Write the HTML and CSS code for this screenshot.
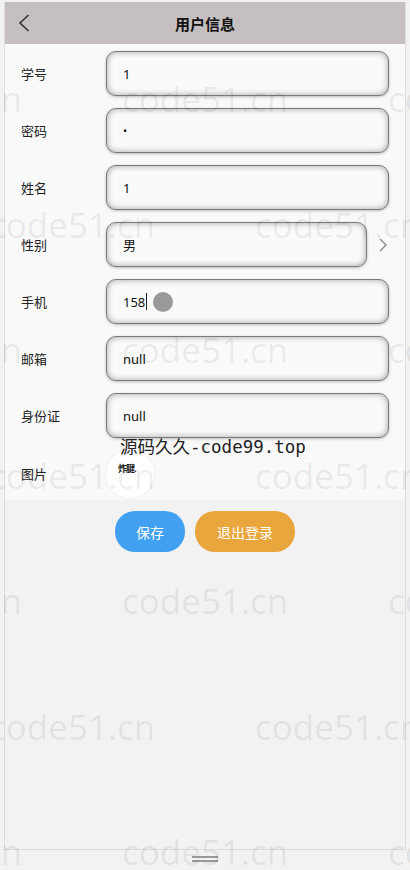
FILE: index.html
```html
<!DOCTYPE html>
<html lang="zh-CN">
<head>
    <meta charset="UTF-8">
    <meta name="viewport" content="width=device-width, initial-scale=1.0">
    <title>用户信息</title>
    <link rel="stylesheet" href="styles.css">
</head>
<body>
    <!-- 手机框 -->
    <div class="phone">
        <!-- 顶部栏 -->
        <div class="nav-bar">
            <span class="nav-back">
                <svg width="12" height="18" viewBox="0 0 12 18"><path d="M10.5 1 L2 9 L10.5 17" fill="none" stroke="#333" stroke-width="1.6"/></svg>
            </span>
            <span class="nav-title">用户信息</span>
        </div>

        <!-- 表单 -->
        <div class="form">
            <div class="form-row">
                <span class="form-label">学号</span>
                <div class="form-input">1</div>
            </div>
            <div class="form-row">
                <span class="form-label">密码</span>
                <div class="form-input password">•</div>
            </div>
            <div class="form-row">
                <span class="form-label">姓名</span>
                <div class="form-input">1</div>
            </div>
            <div class="form-row">
                <span class="form-label">性别</span>
                <div class="form-input short">男</div>
                <span class="row-arrow">
                    <svg width="8" height="14" viewBox="0 0 8 14"><path d="M1 1 L7 7 L1 13" fill="none" stroke="#8a8a8a" stroke-width="1.4"/></svg>
                </span>
            </div>
            <div class="form-row">
                <span class="form-label">手机</span>
                <div class="form-input">158<span class="caret"></span><span class="touch-dot"></span></div>
            </div>
            <div class="form-row">
                <span class="form-label">邮箱</span>
                <div class="form-input">null</div>
            </div>
            <div class="form-row">
                <span class="form-label">身份证</span>
                <div class="form-input">null</div>
            </div>
            <div class="form-row photo-row">
                <span class="form-label">图片</span>
                <div class="avatar"><span class="avatar-text">炸腱.</span></div>
                <span class="stamp">源码久久-code99.top</span>
            </div>
        </div>

        <!-- 按钮 -->
        <div class="button-container">
            <button class="btn btn-save">保存</button>
            <button class="btn btn-logout">退出登录</button>
        </div>
    </div>

    <!-- 底部把手 -->
    <div class="handle">
        <span></span>
        <span></span>
    </div>

    <!-- 水印 -->
    <div class="watermark">
        <div class="wm-row odd"><span>code51.cn</span><span>code51.cn</span><span>code51.cn</span></div>
        <div class="wm-row even"><span>code51.cn</span><span>code51.cn</span></div>
        <div class="wm-row odd"><span>code51.cn</span><span>code51.cn</span><span>code51.cn</span></div>
        <div class="wm-row even"><span>code51.cn</span><span>code51.cn</span></div>
        <div class="wm-row odd"><span>code51.cn</span><span>code51.cn</span><span>code51.cn</span></div>
        <div class="wm-row even"><span>code51.cn</span><span>code51.cn</span></div>
        <div class="wm-row odd"><span>code51.cn</span><span>code51.cn</span><span>code51.cn</span></div>
    </div>
</body>
</html>
```

FILE: styles.css
```css
/* 全局样式 */
body, html {
    margin: 0;
    padding: 0;
    height: 100%;
    overflow: hidden;
    font-family: 'Noto Sans', 'Noto Sans CJK SC', sans-serif;
    background: #f2f2f2;
    color: #222;
}

/* 手机框 */
.phone {
    margin: 2px 4px 0 4px;
    height: 847px;
    border: 1px solid #dcdcdc;
    border-top: none;
    display: flex;
    flex-direction: column;
}

/* 顶部栏 */
.nav-bar {
    height: 42px;
    background: #c5c0bf;
    display: flex;
    align-items: center;
    justify-content: center;
    position: relative;
}

.nav-back {
    position: absolute;
    left: 13px;
    top: 12px;
}

.nav-title {
    font-size: 15px;
    font-weight: bold;
    color: #111;
}

/* 表单 */
.form {
    background: #f9f9f9;
    padding: 7px 16px 6px 16px;
    display: flex;
    flex-direction: column;
    gap: 12px;
}

.form-row {
    display: flex;
    align-items: center;
    height: 45px;
    position: relative;
}

.form-label {
    width: 85px;
    font-size: 13px;
    color: #222;
}

.form-input {
    flex: 1;
    height: 43px;
    display: flex;
    align-items: center;
    padding-left: 16px;
    font-size: 13px;
    color: #111;
    background: #fafafa;
    border: 1px solid #7a7a7a;
    border-radius: 10px;
    box-shadow: inset 0 0 6px rgba(0, 0, 0, 0.35), 0 1px 3px rgba(0, 0, 0, 0.25);
}

.form-input.short {
    flex: none;
    width: 243px;
}

.form-input.password {
    font-size: 11px;
}

.row-arrow {
    margin-left: 12px;
    display: flex;
}

.caret {
    display: inline-block;
    width: 1px;
    height: 17px;
    background: #222;
    margin-left: 1px;
}

.touch-dot {
    display: inline-block;
    width: 20px;
    height: 20px;
    border-radius: 50%;
    background: #9a9a9a;
    margin-left: 6px;
}

/* 图片行 */
.photo-row {
    height: 44px;
}

.photo-row .form-label {
    padding-top: 2px;
}

.avatar {
    width: 48px;
    height: 48px;
    border-radius: 50%;
    background: #fff;
    box-shadow: 0 0 3px rgba(0, 0, 0, 0.08);
    position: relative;
    margin-top: 4px;
}

.avatar-text {
    position: absolute;
    left: 12px;
    top: 12px;
    font-size: 9px;
    font-weight: bold;
    color: #222;
    letter-spacing: -1px;
}

.stamp {
    position: absolute;
    left: 99px;
    top: -17px;
    font-family: 'DejaVu Sans Mono', 'Noto Sans CJK SC', monospace;
    font-size: 17.5px;
    color: #222;
    white-space: nowrap;
}

/* 按钮 */
.button-container {
    display: flex;
    justify-content: center;
    gap: 10px;
    margin-top: 11px;
}

.btn {
    height: 41px;
    border: none;
    border-radius: 20px;
    color: #fff;
    font-size: 14px;
    font-family: 'Noto Sans CJK SC', sans-serif;
    padding: 0;
}

.btn-save {
    width: 70px;
    background: #42a0f2;
}

.btn-logout {
    width: 100px;
    background: #e9a63c;
}

/* 底部把手 */
.handle {
    display: flex;
    flex-direction: column;
    align-items: center;
    gap: 2px;
    margin-top: 6px;
}

.handle span {
    width: 26px;
    height: 2px;
    background: #999;
}

/* 水印 */
.watermark {
    position: absolute;
    top: 36px;
    bottom: 0;
    left: 0;
    width: 100%;
    pointer-events: none;
    font-family: 'Open Sans', sans-serif;
    font-size: 35px;
    color: rgba(0, 0, 0, 0.08);
    overflow: hidden;
}

.wm-row {
    height: 125.5px;
    display: flex;
    align-items: center;
    white-space: nowrap;
}

.wm-row span {
    flex: none;
    width: 266px;
}

.wm-row.odd {
    margin-left: -144px;
}

.wm-row.even {
    margin-left: -11px;
}
```
